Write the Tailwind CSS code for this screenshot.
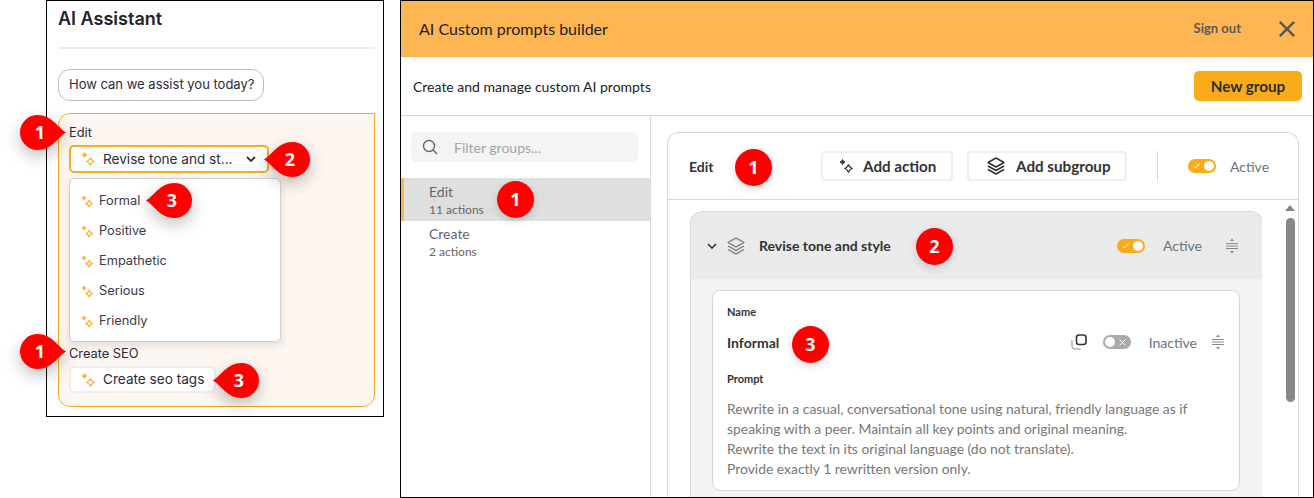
<!DOCTYPE html>
<html lang="en">
<head>
  <meta charset="UTF-8" />
  <title>AI Custom prompts builder</title>
  <script src="https://cdn.jsdelivr.net/npm/@tailwindcss/browser@4"></script>
</head>
<body class="bg-white overflow-hidden">
<div class="relative flex items-start w-[1314px] h-[498px] overflow-hidden">

  <!-- Left: assistant panel -->
  <div class="ml-[46px] w-[338px] h-[417px] border border-black pl-[11px] pr-[8px] pt-[6px] font-['Inter',sans-serif] text-[#2b2b3a]">
    <h2 class="text-[18px] leading-[24px] font-semibold text-[#22222e]">AI Assistant</h2>
    <div class="h-[2px] bg-[#ececec] mt-[16px]"></div>
    <div class="mt-[20px] w-[206px] h-[32px] border border-[#bbb] rounded-[12px] flex items-center pl-[10px] text-[13px] whitespace-nowrap">How can we assist you today?</div>
    <div class="mt-[12px] h-[294px] border border-[#f9ab1a] bg-[#fdf6f1] rounded-[12px] rounded-tr-none pl-[10px] pt-[10px]">
      <div class="text-[12.8px] leading-[17px]">Edit</div>
      <div class="mt-[4px] w-[200px] h-[28px] bg-white border-2 border-[#f9ab1a] rounded-[5px] flex items-center pl-[10px] pr-[10px] text-[13.6px]">
        <svg class="w-[14px] h-[14px] text-[#fbb13c]" viewBox="0 0 14 14" fill="none" stroke="currentColor"><path d="M3.5 0.5Q4 2.5 6 3Q4 3.5 3.5 5.5Q3 3.5 1 3Q3 2.5 3.5 0.5Z" fill="currentColor"/><path d="M9.5 5.5Q10.2 8.3 13 9.5Q10.2 10.7 9.5 13.5Q8.8 10.7 6 9.5Q8.8 8.3 9.5 5.5Z" stroke-width="1.3"/></svg>
        <span class="ml-[8px] flex-1 whitespace-nowrap">Revise tone and st...</span>
        <svg class="w-[12px] h-[12px] text-[#333]" viewBox="0 0 12 12" fill="none" stroke="currentColor" stroke-width="1.8"><path d="M2 4 6 8 10 4"/></svg>
      </div>
      <div class="mt-[5px] w-[212px] h-[164px] bg-white border border-[#cfcfcf] rounded-[5px] shadow-[0_3px_8px_rgba(0,0,0,0.12)] pl-[11px] pt-[7px] text-[12.8px] text-[#3a3a48]">
        <div class="h-[30px] flex items-center gap-[6px]"><svg class="w-[12px] h-[13px] text-[#fbb13c]" viewBox="0 0 14 14" fill="none" stroke="currentColor"><path d="M3.5 0.5Q4 2.5 6 3Q4 3.5 3.5 5.5Q3 3.5 1 3Q3 2.5 3.5 0.5Z" fill="currentColor"/><path d="M9.5 5.5Q10.2 8.3 13 9.5Q10.2 10.7 9.5 13.5Q8.8 10.7 6 9.5Q8.8 8.3 9.5 5.5Z" stroke-width="1.4"/></svg>Formal</div>
        <div class="h-[30px] flex items-center gap-[6px]"><svg class="w-[12px] h-[13px] text-[#fbb13c]" viewBox="0 0 14 14" fill="none" stroke="currentColor"><path d="M3.5 0.5Q4 2.5 6 3Q4 3.5 3.5 5.5Q3 3.5 1 3Q3 2.5 3.5 0.5Z" fill="currentColor"/><path d="M9.5 5.5Q10.2 8.3 13 9.5Q10.2 10.7 9.5 13.5Q8.8 10.7 6 9.5Q8.8 8.3 9.5 5.5Z" stroke-width="1.4"/></svg>Positive</div>
        <div class="h-[30px] flex items-center gap-[6px]"><svg class="w-[12px] h-[13px] text-[#fbb13c]" viewBox="0 0 14 14" fill="none" stroke="currentColor"><path d="M3.5 0.5Q4 2.5 6 3Q4 3.5 3.5 5.5Q3 3.5 1 3Q3 2.5 3.5 0.5Z" fill="currentColor"/><path d="M9.5 5.5Q10.2 8.3 13 9.5Q10.2 10.7 9.5 13.5Q8.8 10.7 6 9.5Q8.8 8.3 9.5 5.5Z" stroke-width="1.4"/></svg>Empathetic</div>
        <div class="h-[30px] flex items-center gap-[6px]"><svg class="w-[12px] h-[13px] text-[#fbb13c]" viewBox="0 0 14 14" fill="none" stroke="currentColor"><path d="M3.5 0.5Q4 2.5 6 3Q4 3.5 3.5 5.5Q3 3.5 1 3Q3 2.5 3.5 0.5Z" fill="currentColor"/><path d="M9.5 5.5Q10.2 8.3 13 9.5Q10.2 10.7 9.5 13.5Q8.8 10.7 6 9.5Q8.8 8.3 9.5 5.5Z" stroke-width="1.4"/></svg>Serious</div>
        <div class="h-[30px] flex items-center gap-[6px]"><svg class="w-[12px] h-[13px] text-[#fbb13c]" viewBox="0 0 14 14" fill="none" stroke="currentColor"><path d="M3.5 0.5Q4 2.5 6 3Q4 3.5 3.5 5.5Q3 3.5 1 3Q3 2.5 3.5 0.5Z" fill="currentColor"/><path d="M9.5 5.5Q10.2 8.3 13 9.5Q10.2 10.7 9.5 13.5Q8.8 10.7 6 9.5Q8.8 8.3 9.5 5.5Z" stroke-width="1.4"/></svg>Friendly</div>
      </div>
      <div class="mt-[3px] text-[12.8px] leading-[17px]">Create SEO</div>
      <div class="mt-[4px] w-[147px] h-[27px] bg-white border-2 border-[#eeeeee] rounded-[5px] flex items-center pl-[10px] text-[13.6px] whitespace-nowrap">
        <svg class="w-[14px] h-[14px] text-[#fbb13c]" viewBox="0 0 14 14" fill="none" stroke="currentColor"><path d="M3.5 0.5Q4 2.5 6 3Q4 3.5 3.5 5.5Q3 3.5 1 3Q3 2.5 3.5 0.5Z" fill="currentColor"/><path d="M9.5 5.5Q10.2 8.3 13 9.5Q10.2 10.7 9.5 13.5Q8.8 10.7 6 9.5Q8.8 8.3 9.5 5.5Z" stroke-width="1.3"/></svg>
        <span class="ml-[8px]">Create seo tags</span>
      </div>
    </div>
  </div>

  <!-- Right: prompts builder -->
  <div class="ml-[16px] w-[914px] h-[498px] border border-black flex flex-col font-['Lato',sans-serif] text-[#222] overflow-hidden">
    <div class="h-[56px] shrink-0 bg-[#fdb652] flex items-center pl-[18px] pr-[17px]">
      <div class="flex-1 text-[16px] text-[#1c1c1c]">AI Custom prompts builder</div>
      <div class="text-[13px] font-bold text-[#5a5a50]">Sign out</div>
      <svg class="ml-[37px] w-[18px] h-[18px] text-[#555]" viewBox="0 0 20 20" fill="none" stroke="currentColor" stroke-width="2.6"><path d="M2 2 18 18M18 2 2 18"/></svg>
    </div>
    <div class="h-[59px] shrink-0 border-b border-[#d8d8d8] flex items-center pl-[12px] pr-[11px]">
      <div class="flex-1 text-[14px]">Create and manage custom AI prompts</div>
      <div class="w-[108px] h-[30px] bg-[#f9ab1a] rounded-[5px] flex items-center justify-center text-[15.2px] font-bold text-[#2b2b2b]">New group</div>
    </div>
    <div class="flex flex-1 min-h-0">
      <!-- Sidebar -->
      <div class="w-[250px] shrink-0 border-r border-[#d8d8d8] pt-[16px]">
        <div class="ml-[10px] w-[227px] h-[30px] bg-[#f4f4f4] rounded-[5px] flex items-center pl-[11px] text-[14px] text-[#a5a5a5]">
          <svg class="w-[16px] h-[16px] text-[#666]" viewBox="0 0 16 16" fill="none" stroke="currentColor" stroke-width="1.4"><circle cx="7" cy="7" r="5.5"/><path d="M11 11 15 15"/></svg>
          <span class="ml-[16px]">Filter groups...</span>
        </div>
        <div class="mt-[16px] h-[43px] bg-[#dfdfdf] border-l-[3px] border-[#fdb652] pl-[25px] pt-[5px]">
          <div class="text-[14px] leading-[18px] text-[#666]">Edit</div>
          <div class="text-[12px] leading-[17px] text-[#666]">11 actions</div>
        </div>
        <div class="h-[42px] pl-[28px] pt-[4px]">
          <div class="text-[14px] leading-[18px] text-[#666]">Create</div>
          <div class="text-[12px] leading-[17px] text-[#666]">2 actions</div>
        </div>
      </div>
      <!-- Main -->
      <div class="flex-1 min-w-0 pl-[16px] pr-[14px] pt-[16px]">
        <div class="h-[400px] border border-[#d8d8d8] rounded-t-[12px] border-b-0 flex flex-col">
          <div class="h-[67px] shrink-0 border-b border-[#d8d8d8] flex items-center pl-[21px]">
            <div class="w-[132px] text-[14px] font-bold text-[#333]">Edit</div>
            <div class="w-[132px] h-[30px] border-2 border-[#eeeeee] rounded-[4px] flex items-center pl-[16px] text-[15.2px] font-bold text-[#333]">
              <svg class="w-[14px] h-[14px] mr-[10px] text-[#333]" viewBox="0 0 14 14" fill="none" stroke="currentColor"><path d="M3.5 0.5Q4 2.5 6 3Q4 3.5 3.5 5.5Q3 3.5 1 3Q3 2.5 3.5 0.5Z" fill="currentColor"/><path d="M9.5 5.5Q10.2 8.3 13 9.5Q10.2 10.7 9.5 13.5Q8.8 10.7 6 9.5Q8.8 8.3 9.5 5.5Z" stroke-width="1.2"/></svg>Add action
            </div>
            <div class="ml-[14px] w-[160px] h-[30px] border-2 border-[#eeeeee] rounded-[4px] flex items-center pl-[17px] text-[15.2px] font-bold text-[#333]">
              <svg class="w-[20px] h-[20px] mr-[10px] text-[#333]" viewBox="0 0 20 20" fill="none" stroke="currentColor" stroke-width="1.5" stroke-linejoin="round"><path d="M10 2 18 6.5 10 11 2 6.5Z"/><path d="M2 10 10 14.5 18 10"/><path d="M2 13.5 10 18 18 13.5"/></svg>Add subgroup
            </div>
            <div class="ml-[30px] w-px h-[30px] bg-[#d8d8d8]"></div>
            <div class="ml-[30px] relative w-[28px] h-[14px] rounded-full bg-[#f9ab1a]">
              <svg class="absolute left-[5px] top-[4px] w-[7px] h-[6px] text-white" viewBox="0 0 7 6" fill="none" stroke="currentColor"><path d="M0.5 3 2.5 5 6.5 0.5"/></svg>
              <div class="absolute right-[2px] top-[2px] w-[10px] h-[10px] rounded-full bg-white"></div>
            </div>
            <div class="ml-[14px] text-[14px] text-[#6b7280]">Active</div>
          </div>
          <div class="flex flex-1 min-h-0">
            <div class="flex-1 min-w-0 pl-[22px] pt-[11px] overflow-hidden">
              <div class="w-[573px] h-[300px] bg-[#f3f3f3] border border-[#d8d8d8] border-b-0 rounded-t-[12px] overflow-hidden">
                <div class="h-[67px] bg-[#eaeaea] flex items-center pl-[15px] pr-[23px]">
                  <svg class="w-[12px] h-[12px] text-[#333]" viewBox="0 0 12 12" fill="none" stroke="currentColor" stroke-width="1.6"><path d="M2 4 6 8 10 4"/></svg>
                  <svg class="ml-[8px] w-[20px] h-[20px] text-[#777]" viewBox="0 0 20 20" fill="none" stroke="currentColor" stroke-width="1.4" stroke-linejoin="round"><path d="M10 2 18 6.5 10 11 2 6.5Z"/><path d="M2 10 10 14.5 18 10"/><path d="M2 13.5 10 18 18 13.5"/></svg>
                  <div class="ml-[13px] flex-1 text-[14px] font-bold text-[#333]">Revise tone and style</div>
                  <div class="relative w-[28px] h-[14px] rounded-full bg-[#f9ab1a]">
                    <svg class="absolute left-[5px] top-[4px] w-[7px] h-[6px] text-white" viewBox="0 0 7 6" fill="none" stroke="currentColor"><path d="M0.5 3 2.5 5 6.5 0.5"/></svg>
                    <div class="absolute right-[2px] top-[2px] w-[10px] h-[10px] rounded-full bg-white"></div>
                  </div>
                  <div class="ml-[18px] text-[14px] text-[#6b7280]">Active</div>
                  <svg class="ml-[23px] w-[14px] h-[16px] text-[#888]" viewBox="0 0 14 16" fill="none" stroke="currentColor"><path d="M1 5.5H13M1 8H13M1 10.5H13"/><path d="M7 0.5 9 3H5ZM7 15.5 9 13H5Z" fill="currentColor" stroke="none"/></svg>
                </div>
                <div class="ml-[21px] mt-[11px] w-[528px] h-[201px] bg-white border border-[#d8d8d8] rounded-[8px] pl-[14px] pr-[14px] pt-[14px]">
                  <div class="text-[11px] leading-[14px] font-bold text-[#333]">Name</div>
                  <div class="mt-[8px] h-[30px] flex items-center">
                    <div class="flex-1 text-[14px] font-bold text-[#333]">Informal</div>
                    <svg class="w-[16px] h-[16px] text-[#333]" viewBox="0 0 16 16" fill="none" stroke="currentColor" stroke-width="1.6"><rect x="5.5" y="1" width="9.5" height="9.5" rx="2.5"/><path d="M1 6V12.5Q1 15 3.5 15H9.5" stroke="#888" stroke-width="1"/></svg>
                    <div class="ml-[16px] relative w-[28px] h-[14px] rounded-full bg-[#aaa]">
                      <div class="absolute left-[2px] top-[2px] w-[10px] h-[10px] rounded-full bg-white"></div>
                      <svg class="absolute right-[5px] top-[3.5px] w-[7px] h-[7px] text-white" viewBox="0 0 7 7" fill="none" stroke="currentColor"><path d="M0.5 0.5 6.5 6.5M6.5 0.5 0.5 6.5"/></svg>
                    </div>
                    <div class="ml-[18px] text-[14px] text-[#6b7280]">Inactive</div>
                    <svg class="ml-[14px] w-[14px] h-[16px] text-[#888]" viewBox="0 0 14 16" fill="none" stroke="currentColor"><path d="M1 5.5H13M1 8H13M1 10.5H13"/><path d="M7 0.5 9 3H5ZM7 15.5 9 13H5Z" fill="currentColor" stroke="none"/></svg>
                  </div>
                  <div class="mt-[15px] text-[11px] leading-[14px] font-bold text-[#333]">Prompt</div>
                  <div class="mt-[13px] text-[13.9px] leading-[20px] text-[#777] whitespace-nowrap">
                    Rewrite in a casual, conversational tone using natural, friendly language as if<br>
                    speaking with a peer. Maintain all key points and original meaning.<br>
                    Rewrite the text in its original language (do not translate).<br>
                    Provide exactly 1 rewritten version only.
                  </div>
                </div>
              </div>
            </div>
            <!-- Scrollbar -->
            <div class="w-[36px] shrink-0 flex flex-col items-end pr-[3px] pt-[5px]">
              <div class="w-[10px] flex flex-col items-center">
                <svg class="w-[10px] h-[6px] text-[#888]" viewBox="0 0 10 6" fill="currentColor"><path d="M5 0 10 6H0Z"/></svg>
                <div class="mt-[7px] w-[9px] h-[184px] bg-[#888] rounded-full"></div>
              </div>
            </div>
          </div>
        </div>
      </div>
    </div>
  </div>

  <!-- Callouts -->
  <div class="absolute left-[20px] top-[115px] w-[46px] h-[35px] flex items-center justify-center pr-[6px] text-white font-bold text-[18px] font-['Open_Sans',sans-serif]">
    <svg class="absolute inset-0 -scale-x-100 drop-shadow-[0_6px_8px_rgba(0,0,0,0.25)]" viewBox="0 0 46 35" fill="#ff0000"><path d="M0 17.5C8 13 14 0 28.5 0A17.5 17.5 0 1 1 28.5 35C14 35 8 22 0 17.5Z"/></svg><span class="relative">1</span>
  </div>
  <div class="absolute left-[20px] top-[334px] w-[46px] h-[35px] flex items-center justify-center pr-[6px] text-white font-bold text-[18px] font-['Open_Sans',sans-serif]">
    <svg class="absolute inset-0 -scale-x-100 drop-shadow-[0_6px_8px_rgba(0,0,0,0.25)]" viewBox="0 0 46 35" fill="#ff0000"><path d="M0 17.5C8 13 14 0 28.5 0A17.5 17.5 0 1 1 28.5 35C14 35 8 22 0 17.5Z"/></svg><span class="relative">1</span>
  </div>
  <div class="absolute left-[264px] top-[142px] w-[46px] h-[35px] flex items-center justify-center pl-[6px] text-white font-bold text-[18px] font-['Open_Sans',sans-serif]">
    <svg class="absolute inset-0 drop-shadow-[0_6px_8px_rgba(0,0,0,0.25)]" viewBox="0 0 46 35" fill="#ff0000"><path d="M0 17.5C8 13 14 0 28.5 0A17.5 17.5 0 1 1 28.5 35C14 35 8 22 0 17.5Z"/></svg><span class="relative">2</span>
  </div>
  <div class="absolute left-[146px] top-[183px] w-[46px] h-[35px] flex items-center justify-center pl-[6px] text-white font-bold text-[18px] font-['Open_Sans',sans-serif]">
    <svg class="absolute inset-0 drop-shadow-[0_6px_8px_rgba(0,0,0,0.25)]" viewBox="0 0 46 35" fill="#ff0000"><path d="M0 17.5C8 13 14 0 28.5 0A17.5 17.5 0 1 1 28.5 35C14 35 8 22 0 17.5Z"/></svg><span class="relative">3</span>
  </div>
  <div class="absolute left-[213px] top-[363px] w-[46px] h-[35px] flex items-center justify-center pl-[6px] text-white font-bold text-[18px] font-['Open_Sans',sans-serif]">
    <svg class="absolute inset-0 drop-shadow-[0_6px_8px_rgba(0,0,0,0.25)]" viewBox="0 0 46 35" fill="#ff0000"><path d="M0 17.5C8 13 14 0 28.5 0A17.5 17.5 0 1 1 28.5 35C14 35 8 22 0 17.5Z"/></svg><span class="relative">3</span>
  </div>
  <div class="absolute left-[497px] top-[181px] w-[37px] h-[37px] rounded-full bg-[#ff0000] shadow-[0_3px_8px_rgba(0,0,0,0.15)] flex items-center justify-center text-white font-bold text-[18px] font-['Open_Sans',sans-serif]">1</div>
  <div class="absolute left-[735px] top-[149px] w-[37px] h-[37px] rounded-full bg-[#ff0000] shadow-[0_3px_8px_rgba(0,0,0,0.15)] flex items-center justify-center text-white font-bold text-[18px] font-['Open_Sans',sans-serif]">1</div>
  <div class="absolute left-[916px] top-[228px] w-[37px] h-[37px] rounded-full bg-[#ff0000] shadow-[0_3px_8px_rgba(0,0,0,0.15)] flex items-center justify-center text-white font-bold text-[18px] font-['Open_Sans',sans-serif]">2</div>
  <div class="absolute left-[792px] top-[326px] w-[37px] h-[37px] rounded-full bg-[#ff0000] shadow-[0_3px_8px_rgba(0,0,0,0.15)] flex items-center justify-center text-white font-bold text-[18px] font-['Open_Sans',sans-serif]">3</div>
</div>
</body>
</html>
